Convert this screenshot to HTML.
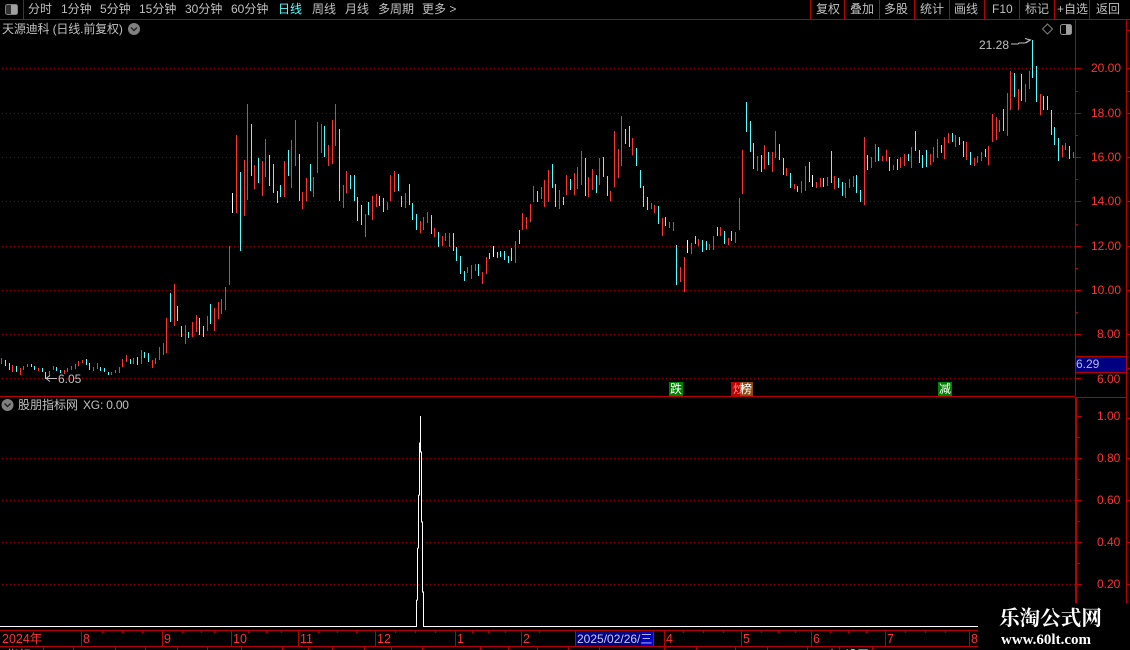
<!DOCTYPE html>
<html><head><meta charset="utf-8"><style>
html,body{margin:0;padding:0;background:#000;width:1130px;height:650px;overflow:hidden}
#r{position:relative;width:1130px;height:650px;overflow:hidden;background:#000;font:12px/16px "Liberation Sans","WenQuanYi Zen Hei","Noto Sans CJK SC",sans-serif;color:#c0c0c0}
svg{position:absolute;left:0;top:0}
.t{position:absolute;white-space:nowrap}
.p{position:absolute;white-space:nowrap;color:#ff3232;left:1091px}
.l{left:1097px}
.x{position:absolute;top:631px;color:#ff3232;white-space:nowrap;line-height:16px;font-size:12.5px}
.b{position:absolute;top:382px;width:14px;height:14px;line-height:14px;text-align:center;color:#fff;background:#008000}
</style></head><body><div id="r">
<svg width="1130" height="650" viewBox="0 0 1130 650" fill="none" shape-rendering="crispEdges">
<defs><pattern id="d" x="2" y="0" width="4" height="1" patternUnits="userSpaceOnUse"><rect width="1" height="1" fill="#900000"/></pattern></defs>
<g fill="url(#d)">
<rect x="2" y="68" width="1073" height="1"/><rect x="2" y="113" width="1073" height="1"/><rect x="2" y="157" width="1073" height="1"/><rect x="2" y="201" width="1073" height="1"/><rect x="2" y="246" width="1073" height="1"/><rect x="2" y="290" width="1073" height="1"/><rect x="2" y="334" width="1073" height="1"/><rect x="2" y="378" width="1073" height="1"/><rect x="2" y="458" width="1074" height="1"/><rect x="2" y="500" width="1074" height="1"/><rect x="2" y="542" width="1074" height="1"/><rect x="2" y="584" width="1074" height="1"/>
</g>
<path stroke="#ff3232" d="M1.5 358V364M12.5 365V372M20.5 368V375M23.5 366V370M27.5 364V367M38.5 368V371M49.5 371V376M53.5 366V370M64.5 370V374M67.5 368V372M71.5 366V370M75.5 364V369M78.5 361V366M82.5 360V363M93.5 367V371M97.5 363V369M111.5 372V375M115.5 370V373M119.5 367V373M122.5 359V367M126.5 355V362M133.5 358V364M141.5 350V364M152.5 360V368M155.5 358V364M159.5 347V360M163.5 343V355M166.5 318V353M174.5 284V326M185.5 325V344M192.5 322V337M196.5 315V332M207.5 316V331M214.5 308V331M218.5 302V319M221.5 299V314M225.5 287V310M229.5 246V285M236.5 135V213M244.5 160V216M247.5 104V200M254.5 165V189M262.5 161V196M265.5 139V177M284.5 161V197M291.5 140V188M295.5 120V166M302.5 192V209M306.5 178V201M313.5 177V197M317.5 122V173M321.5 124V153M328.5 145V166M332.5 120V164M335.5 104V146M343.5 185V208M346.5 171V193M365.5 214V237M372.5 196V220M376.5 194V207M387.5 202V210M390.5 175V201M394.5 171V192M405.5 193V208M420.5 221V233M423.5 217V230M427.5 212V223M434.5 228V237M442.5 236V246M445.5 233V241M449.5 233V247M467.5 267V273M471.5 265V279M475.5 264V271M482.5 272V284M486.5 257V274M515.5 241V263M522.5 213V230M526.5 217V229M530.5 204V222M533.5 186V202M541.5 187V199M544.5 180V207M548.5 170V202M559.5 190V209M566.5 175V195M574.5 173V195M577.5 167V189M581.5 151V185M588.5 177V197M592.5 169V190M599.5 158V185M610.5 191V201M614.5 131V187M618.5 149V178M621.5 116V166M632.5 138V155M651.5 203V209M654.5 205V213M662.5 218V236M669.5 222V228M673.5 222V231M680.5 267V282M684.5 257V292M691.5 243V254M698.5 239V246M709.5 244V250M713.5 236V250M720.5 227V236M728.5 238V245M735.5 232V243M739.5 198V230M742.5 150V194M757.5 156V171M764.5 145V169M772.5 152V172M775.5 131V158M786.5 168V176M794.5 184V189M801.5 181V193M805.5 166V191M816.5 182V188M820.5 178V187M827.5 177V186M834.5 176V189M845.5 183V198M849.5 179V188M853.5 176V187M864.5 137V205M871.5 157V168M875.5 144V162M882.5 156V161M886.5 150V161M893.5 165V170M900.5 157V168M904.5 154V166M911.5 147V168M930.5 154V165M933.5 147V162M937.5 139V158M944.5 137V159M948.5 133V143M955.5 135V147M966.5 142V160M974.5 158V166M977.5 156V163M981.5 152V161M988.5 146V165M992.5 114V142M996.5 117V140M999.5 120V132M1007.5 93V136M1010.5 71V110M1018.5 89V110M1025.5 84V102M1029.5 71V89M1040.5 94V115M1062.5 145V157M1065.5 143V150M1073.5 152V158"/>
<path stroke="#54ffff" d="M5.5 360V366M9.5 363V370M16.5 366V372M31.5 364V367M34.5 366V370M42.5 368V372M45.5 372V379M56.5 367V371M60.5 370V373M86.5 359V365M89.5 363V370M100.5 367V371M104.5 368V372M108.5 372V375M130.5 359V364M137.5 357V365M144.5 352V358M148.5 353V362M170.5 293V322M177.5 306V321M181.5 326V337M188.5 332V338M199.5 318V335M203.5 326V337M210.5 304V324M240.5 172V251M251.5 124V176M258.5 158V183M269.5 155V186M273.5 164V193M277.5 191V203M280.5 185V197M288.5 150V176M299.5 154V201M310.5 164V191M324.5 126V157M339.5 129V201M350.5 175V189M354.5 175V201M357.5 197V221M361.5 205V225M368.5 202V215M379.5 196V206M383.5 198V212M398.5 174V191M401.5 196V207M409.5 184V205M412.5 203V220M416.5 214V230M431.5 215V234M438.5 232V247M453.5 233V251M456.5 247V261M460.5 256V274M464.5 271V281M478.5 264V276M489.5 253V259M497.5 252V258M500.5 251V257M504.5 251V260M508.5 256V263M511.5 248V261M519.5 230V244M537.5 191V202M552.5 164V188M555.5 184V207M563.5 197V205M570.5 179V190M585.5 158V196M596.5 175V193M603.5 157V177M607.5 176V196M625.5 129V144M629.5 126V147M636.5 148V166M640.5 170V188M643.5 186V207M647.5 197V210M658.5 206V224M665.5 217V226M676.5 245V285M695.5 236V244M702.5 240V252M706.5 241V250M717.5 227V236M724.5 231V244M731.5 231V241M746.5 102V132M750.5 121V152M753.5 143V169M761.5 155V172M768.5 152V165M779.5 144V160M783.5 158V175M790.5 173V188M797.5 186V192M809.5 162V182M823.5 178V187M831.5 151V183M838.5 178V188M842.5 182V196M856.5 175V193M860.5 190V202M867.5 155V170M878.5 147V161M889.5 157V171M897.5 159V170M908.5 154V161M915.5 131V151M919.5 150V163M922.5 155V168M926.5 150V167M941.5 145V153M952.5 133V142M959.5 137V145M963.5 141V157M970.5 152V165M985.5 149V157M1003.5 109V131M1014.5 73V97M1021.5 74V101M1032.5 40V78M1036.5 66V102M1043.5 96V110M1047.5 96V110M1051.5 110V135M1054.5 127V145M1058.5 138V161M1069.5 146V159"/>
<path stroke="#fff" d="M232.5 193V213M493.5 246V257M687.5 240V253M812.5 175V187"/>
<path stroke="#fff" d="M0 626.5H416.5V600M416.5 600H417.5V548M417.5 548H418.5V495M418.5 495H419.5V443H420.5V416M420.5 443V452H421.5V522H422.5V592H423.5V626.5H978"/>
<g stroke="#b80000">
<path d="M0 19.5H1130M23.5 0V19M810.5 0V19M844.5 0V19M879.5 0V19M914.5 0V19M949.5 0V19M984.5 0V19M1019.5 0V19M1054.5 0V19M1089.5 0V19"/>
<path d="M0 396.5H1075M1075.5 20V396M1076.5 397.5H1126M1076.5 397V603M1075.5 397V603M1126.5 20V603"/>
<path d="M1075 68.5H1081M1075 113.5H1081M1075 157.5H1081M1075 201.5H1081M1075 246.5H1081M1075 290.5H1081M1075 334.5H1081M1075 378.5H1081M1075 91.5H1078M1075 135.5H1078M1075 179.5H1078M1075 224.5H1078M1075 268.5H1078M1075 312.5H1078M1077 416.5H1082M1077 458.5H1082M1077 500.5H1082M1077 542.5H1082M1077 584.5H1082M1077 437.5H1080M1077 479.5H1080M1077 521.5H1080M1077 563.5H1080M1126 30.5H1130M1126 68.5H1130M1126 91.5H1130M1126 113.5H1130M1126 157.5H1130M1126 201.5H1130M1126 246.5H1130M1126 290.5H1130M1126 334.5H1130M1126 368.5H1130M1126 418.5H1130M1126 458.5H1130M1126 500.5H1130M1126 542.5H1130M1126 584.5H1130"/>
<path d="M0 630.5H978M0 646.5H978M81.5 630V646M162.5 630V646M231.5 630V646M298.5 630V646M375.5 630V646M455.5 630V646M521.5 630V646M664.5 630V646M741.5 630V646M811.5 630V646M885.5 630V646M969.5 630V646M102.5 631V633M122.5 631V633M142.5 631V633M182.5 631V633M201.5 631V633M214.5 631V633M248.5 631V633M266.5 631V633M281.5 631V633M318.5 631V633M337.5 631V633M356.5 631V633M395.5 631V633M415.5 631V633M435.5 631V633M472.5 631V633M488.5 631V633M505.5 631V633M539.5 631V633M683.5 631V633M703.5 631V633M723.5 631V633M761.5 631V633M778.5 631V633M795.5 631V633M830.5 631V633M848.5 631V633M866.5 631V633M905.5 631V633M925.5 631V633M945.5 631V633M43.5 647V650M73.5 647V650M115.5 647V650M145.5 647V650M177.5 647V650M207.5 647V650M241.5 647V650M282.5 647V650M308.5 647V650M332.5 647V650M364.5 647V650M391.5 647V650M422.5 647V650M480.5 647V650M508.5 647V650M537.5 647V650M568.5 647V650M599.5 647V650M664.5 647V650M696.5 647V650M735.5 647V650M767.5 647V650M807.5 647V650M839.5 647V650M872.5 647V650"/>
</g>
<rect x="1075.5" y="356.5" width="51" height="16" fill="#000080" stroke="#b80000"/>
<rect x="575.5" y="630.5" width="78" height="16" fill="#000080" stroke="#b80000"/>
<rect x="641" y="632" width="12" height="14" fill="#0000c8"/>
<rect x="978" y="603" width="152" height="47" fill="#000"/>
<rect x="731" y="382" width="9" height="14" fill="#c00000"/>
<rect x="740" y="382" width="13" height="14" fill="#8b4a10"/>
</svg>
<svg width="1130" height="650" viewBox="0 0 1130 650" fill="none">
<rect x="5.5" y="4.5" width="12" height="10" rx="2" stroke="#808080" fill="#303030"/>
<rect x="11" y="5" width="6" height="9" fill="#a0a0a0"/>
<rect x="1060.5" y="24.5" width="11" height="10" rx="2" stroke="#909090"/>
<rect x="1066" y="25" width="5" height="9" fill="#a0a0a0"/>
<path d="M1047.5 24L1052.5 29L1047.5 34L1042.5 29Z" stroke="#808080"/>
<circle cx="134" cy="29" r="6" fill="#808080"/><path d="M131 27.5L134 30.5L137 27.5" stroke="#222" stroke-width="1.4"/>
<circle cx="7.5" cy="405" r="6" fill="#808080"/><path d="M4.5 403.5L7.5 406.5L10.5 403.5" stroke="#222" stroke-width="1.4"/>
<path d="M1011 44H1018L1019 43H1025L1030 40M1025 38.5L1030.5 40L1026 43" stroke="#c0c0c0"/>
<path d="M57 378.5H46M46 378.5L50 375.5M46 378.5L50 381.5" stroke="#c0c0c0"/>
</svg>
<span class="t" style="left:28px;top:1px">分时</span>
<span class="t" style="left:61px;top:1px">1分钟</span>
<span class="t" style="left:100px;top:1px">5分钟</span>
<span class="t" style="left:139px;top:1px">15分钟</span>
<span class="t" style="left:185px;top:1px">30分钟</span>
<span class="t" style="left:231px;top:1px">60分钟</span>
<span class="t" style="left:278px;top:1px;color:#54ffff">日线</span>
<span class="t" style="left:312px;top:1px">周线</span>
<span class="t" style="left:345px;top:1px">月线</span>
<span class="t" style="left:378px;top:1px">多周期</span>
<span class="t" style="left:422px;top:1px">更多 &gt;</span>
<span class="t" style="left:816px;top:1px">复权</span>
<span class="t" style="left:850px;top:1px">叠加</span>
<span class="t" style="left:884px;top:1px">多股</span>
<span class="t" style="left:920px;top:1px">统计</span>
<span class="t" style="left:954px;top:1px">画线</span>
<span class="t" style="left:992px;top:1px">F10</span>
<span class="t" style="left:1025px;top:1px">标记</span>
<span class="t" style="left:1057px;top:1px">+自选</span>
<span class="t" style="left:1096px;top:1px">返回</span>
<span class="t" style="left:2px;top:21px;letter-spacing:-.15px">天源迪科 (日线.前复权)</span>
<span class="t" style="left:18px;top:397px">股朋指标网</span>
<span class="t" style="left:83px;top:397px;letter-spacing:-.2px">XG: 0.00</span>
<span class="t" style="left:979px;top:37px">21.28</span>
<span class="t" style="left:58px;top:371px">6.05</span>
<span class="p" style="top:60px">20.00</span>
<span class="p" style="top:105px">18.00</span>
<span class="p" style="top:149px">16.00</span>
<span class="p" style="top:193px">14.00</span>
<span class="p" style="top:238px">12.00</span>
<span class="p" style="top:282px">10.00</span>
<span class="p l" style="top:326px">8.00</span>
<span class="p l" style="top:371px">6.00</span>
<span class="t" style="left:1076px;top:356px;color:#b8b8f0">6.29</span>
<span class="p l" style="top:408px">1.00</span>
<span class="p l" style="top:450px">0.80</span>
<span class="p l" style="top:492px">0.60</span>
<span class="p l" style="top:534px">0.40</span>
<span class="p l" style="top:576px">0.20</span>
<span class="b" style="left:669px">跌</span>
<span class="b" style="left:732px;background:none;color:#ff9090">炒</span>
<span class="b" style="left:739px;background:none">榜</span>
<span class="b" style="left:938px">减</span>
<span class="x" style="left:2px">2024年</span>
<span class="x" style="left:83px">8</span>
<span class="x" style="left:164px">9</span>
<span class="x" style="left:233px">10</span>
<span class="x" style="left:300px">11</span>
<span class="x" style="left:377px">12</span>
<span class="x" style="left:457px">1</span>
<span class="x" style="left:523px">2</span>
<span class="x" style="left:577px;color:#c8c8f0;font-size:12px">2025/02/26/三</span>
<span class="x" style="left:666px">4</span>
<span class="x" style="left:743px">5</span>
<span class="x" style="left:813px">6</span>
<span class="x" style="left:887px">7</span>
<span class="x" style="left:971px">8</span>
<span class="t" style="left:7px;top:647px">指标</span>
<span class="t" style="left:826px;top:647px">十</span>
<span class="t" style="left:845px;top:647px;color:#54ffff">设置</span>
<span class="t" style="left:999px;top:607px;font:bold 20.6px/24px 'Liberation Serif','Noto Serif CJK SC',serif;color:#fff">乐淘公式网</span>
<span class="t" style="left:1001px;top:632px;font:bold 15px/16px 'Liberation Serif','Noto Serif CJK SC',serif;color:#fff">www.60lt.com</span>
</div></body></html>
